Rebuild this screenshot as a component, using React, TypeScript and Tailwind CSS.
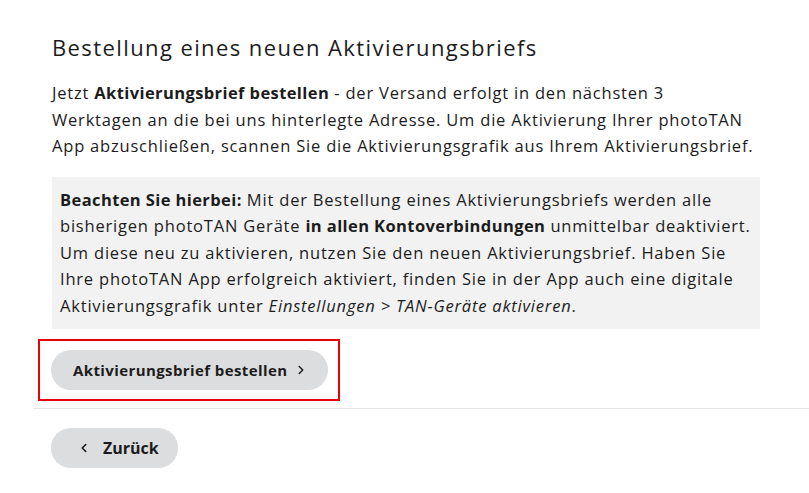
import { ChevronLeft, ChevronRight } from "lucide-react"

export default function App() {
    return (
        <div className="min-h-[493px] w-[809px] bg-white text-[#1c1c1c] font-['Open_Sans',sans-serif] overflow-hidden">
            <div className="pl-[52px] pt-[33px] w-[762px]">
                {/* Heading */}
                <h1 className="text-[22px] leading-[28px] tracking-[1.4px] mb-[19px] whitespace-nowrap">Bestellung eines neuen Aktivierungsbriefs</h1>

                {/* Intro */}
                <p className="text-[16.5px] leading-[26.5px] tracking-[0.8px] whitespace-nowrap">
                    Jetzt <strong className="font-bold tracking-[0.4px]">Aktivierungsbrief bestellen</strong> - der Versand erfolgt in den nächsten 3<br />
                    Werktagen an die bei uns hinterlegte Adresse. Um die Aktivierung Ihrer photoTAN<br />
                    App abzuschließen, scannen Sie die Aktivierungsgrafik aus Ihrem Aktivierungsbrief.
                </p>

                {/* Hint box */}
                <div className="mt-[17px] w-[708px] bg-[#f2f2f2] px-[8px] pt-[10px] pb-[10px] text-[16.5px] leading-[26.5px] tracking-[0.8px] whitespace-nowrap">
                    <strong className="font-bold tracking-[0.4px]">Beachten Sie hierbei:</strong> Mit der Bestellung eines Aktivierungsbriefs werden alle<br />
                    bisherigen photoTAN Geräte <strong className="font-bold tracking-[0.4px]">in allen Kontoverbindungen</strong> unmittelbar deaktiviert.<br />
                    Um diese neu zu aktivieren, nutzen Sie den neuen Aktivierungsbrief. Haben Sie<br />
                    Ihre photoTAN App erfolgreich aktiviert, finden Sie in der App auch eine digitale<br />
                    Aktivierungsgrafik unter <em>Einstellungen &gt; TAN-Geräte aktivieren</em>.
                </div>

                {/* Primary action */}
                <div className="mt-[10px] -ml-[14px] w-[302px] border-2 border-[#e8000d] px-[11px] py-[9px]">
                    <button className="h-[40px] w-[277px] rounded-full bg-[#dcdddf] flex items-center pl-[22px] gap-[7px] text-[15px] tracking-[0.4px] font-bold whitespace-nowrap">
                        Aktivierungsbrief bestellen
                        <ChevronRight className="w-[14px] h-[14px]" strokeWidth={2.5} />
                    </button>
                </div>
            </div>

            <div className="mt-[7px] ml-[33px] h-px bg-[#e6e6e6]" />

            <div className="pl-[51px] pt-[19px]">
                <button className="h-[40px] w-[127px] rounded-full bg-[#dcdddf] flex items-center pl-[26px] gap-[12px] text-[16px] font-bold">
                    <ChevronLeft className="w-[14px] h-[14px]" strokeWidth={2.75} />
                    Zurück
                </button>
            </div>
        </div>
    )
}
